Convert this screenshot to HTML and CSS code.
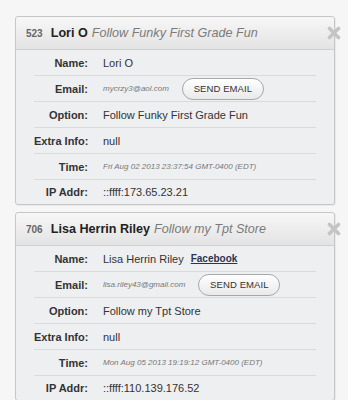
FILE: index.html
```html
<!DOCTYPE html>
<html>
<head>
<meta charset="utf-8">
<link rel="stylesheet" href="styles.css">
</head>
<body>
<div class="list">
  <div class="card">
    <div class="card-head">
      <span class="num">523</span>
      <span class="who">Lori O</span>
      <span class="opt">Follow Funky First Grade Fun</span>
    </div>
    <svg class="close" viewBox="0 0 14 14" width="14" height="14"><path d="M2.5 2.5 L11.5 11.5 M11.5 2.5 L2.5 11.5" stroke="#c4c4c4" stroke-width="3.6" stroke-linecap="round"/></svg>
    <div class="rows">
      <div class="row"><div class="lbl">Name:</div><div class="val">Lori O</div></div>
      <div class="row"><div class="lbl">Email:</div><div class="val"><span class="small">mycrzy3@aol.com</span><span class="btn">SEND EMAIL</span></div></div>
      <div class="row"><div class="lbl">Option:</div><div class="val">Follow Funky First Grade Fun</div></div>
      <div class="row"><div class="lbl">Extra Info:</div><div class="val">null</div></div>
      <div class="row"><div class="lbl">Time:</div><div class="val"><span class="small">Fri Aug 02 2013 23:37:54 GMT-0400 (EDT)</span></div></div>
      <div class="row"><div class="lbl">IP Addr:</div><div class="val">::ffff:173.65.23.21</div></div>
    </div>
  </div>
  <div class="card">
    <div class="card-head">
      <span class="num">706</span>
      <span class="who">Lisa Herrin Riley</span>
      <span class="opt">Follow my Tpt Store</span>
    </div>
    <svg class="close" viewBox="0 0 14 14" width="14" height="14"><path d="M2.5 2.5 L11.5 11.5 M11.5 2.5 L2.5 11.5" stroke="#c4c4c4" stroke-width="3.6" stroke-linecap="round"/></svg>
    <div class="rows">
      <div class="row"><div class="lbl">Name:</div><div class="val">Lisa Herrin Riley<a class="fb" href="#">Facebook</a></div></div>
      <div class="row"><div class="lbl">Email:</div><div class="val"><span class="small">lisa.riley43@gmail.com</span><span class="btn">SEND EMAIL</span></div></div>
      <div class="row"><div class="lbl">Option:</div><div class="val">Follow my Tpt Store</div></div>
      <div class="row"><div class="lbl">Extra Info:</div><div class="val">null</div></div>
      <div class="row"><div class="lbl">Time:</div><div class="val"><span class="small">Mon Aug 05 2013 19:19:12 GMT-0400 (EDT)</span></div></div>
      <div class="row"><div class="lbl">IP Addr:</div><div class="val">::ffff:110.139.176.52</div></div>
    </div>
  </div>
</div>
</body>
</html>
```

FILE: styles.css
```css
html, body {
  margin: 0;
  padding: 0;
  background: #f6f6f6;
  font-family: "Liberation Sans", Arial, sans-serif;
  color: #333;
}
.list {
  display: flex;
  flex-direction: column;
  gap: 7px;
  padding: 16px 0 0 15px;
  width: 320px;
}
.card {
  position: relative;
  border: 1px solid #c6c6c6;
  border-radius: 3px;
  background: #eeeff1;
  box-shadow: 1px 1px 1px rgba(0,0,0,0.06);
}
.card-head {
  height: 32px;
  display: flex;
  align-items: center;
  padding-left: 10px;
  background: linear-gradient(#f7f7f7, #e3e3e3);
  border-bottom: 1px solid #cfcfcf;
  border-radius: 3px 3px 0 0;
  white-space: nowrap;
}
.num {
  font-size: 10px;
  font-weight: bold;
  color: #666;
  margin-right: 8px;
}
.who {
  font-size: 12.6px;
  font-weight: bold;
  color: #222;
  margin-right: 4px;
}
.opt {
  font-size: 12.6px;
  font-style: italic;
  color: #7a7a7a;
}
.close {
  position: absolute;
  top: 9px;
  right: -7px;
}
.rows {
  padding: 0 18px;
}
.row {
  display: grid;
  grid-template-columns: 54px 1fr;
  column-gap: 15px;
  align-items: center;
  height: 25px;
  border-bottom: 1px solid #d9dadc;
}
.row:last-child {
  border-bottom: none;
  height: 24px;
}
.lbl {
  text-align: right;
  font-size: 11px;
  font-weight: bold;
  color: #333;
  white-space: nowrap;
}
.val {
  display: flex;
  align-items: center;
  font-size: 11px;
  color: #333;
  white-space: nowrap;
}
.small {
  font-size: 8px;
  font-style: italic;
  color: #777;
}
.btn {
  margin-left: 13px;
  width: 80px;
  height: 20px;
  border: 1px solid #a8a8a8;
  border-radius: 11px;
  background: linear-gradient(#ffffff, #e9e9e9);
  box-shadow: inset 0 1px 0 #fff;
  display: flex;
  align-items: center;
  justify-content: center;
  font-size: 9.5px;
  color: #333;
  letter-spacing: 0.1px;
}
.fb {
  margin-left: 7px;
  font-size: 10px;
  font-weight: bold;
  color: #2c3550;
  text-decoration: underline;
}
```
